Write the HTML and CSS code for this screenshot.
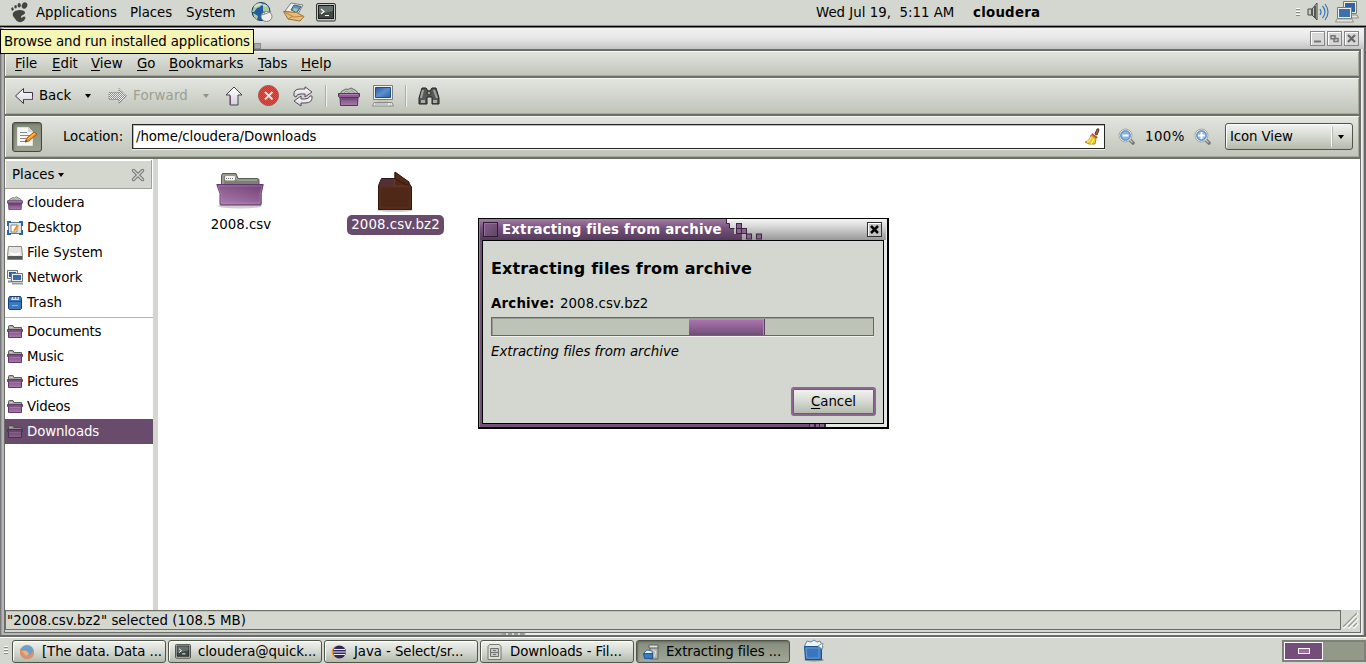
FILE: index.html
```
<!DOCTYPE html>
<html lang="en">
<head>
<meta charset="utf-8">
<title>Downloads - File Browser</title>
<link rel="stylesheet" href="styles.css">
</head>
<body>
<svg class="defs" width="0" height="0">
  <defs>
    <linearGradient id="purple" x1="0" y1="0" x2="0" y2="1"><stop offset="0" stop-color="#75477c"/><stop offset="1" stop-color="#a97bab"/></linearGradient>
    <linearGradient id="folderFront" x1=".8" y1="0" x2=".2" y2="1"><stop offset="0" stop-color="#744578"/><stop offset="1" stop-color="#aa7aad"/></linearGradient>
    <linearGradient id="titleFill" x1="0" y1="0" x2="0" y2="21" gradientUnits="userSpaceOnUse"><stop offset="0" stop-color="#a17ba6"/><stop offset=".45" stop-color="#74517a"/><stop offset="1" stop-color="#553a5b"/></linearGradient>
    <linearGradient id="screen" x1="0" y1="0" x2="1" y2="1"><stop offset="0" stop-color="#245b9f"/><stop offset=".5" stop-color="#5c91ce"/><stop offset="1" stop-color="#2860a4"/></linearGradient>
    <linearGradient id="silver" x1="0" y1="0" x2="0" y2="1"><stop offset="0" stop-color="#fff"/><stop offset="1" stop-color="#d5d3d7"/></linearGradient>
    <pattern id="redDots" width="2" height="2" patternUnits="userSpaceOnUse"><rect width="2" height="2" fill="#dd5048"/><rect width="1" height="1" fill="#84504a"/><rect x="1" y="1" width="1" height="1" fill="#84504a"/></pattern>
    <pattern id="greyDots" width="2" height="2" patternUnits="userSpaceOnUse"><rect width="2" height="2" fill="#eeefec"/><rect width="1" height="1" fill="#8b8c8c"/><rect x="1" y="1" width="1" height="1" fill="#8b8c8c"/></pattern>
    <symbol id="folder16" viewBox="0 0 16 14">
      <path d="M1.500 8V1.500Q1.500.5 2.500.5H6L7 2.500H14.500V8z" fill="#a5a9a0" stroke="#5c6058"/>
      <path d="M2.500 2.500h3" stroke="#c8ccc3"/>
      <path d="M.5 4.500h15v2H14.500V12.500H1.500V6.500H.5z" fill="url(#purple)" stroke="#62396a"/>
      <path d="M2.500 7.500h11" stroke="#b889bb" stroke-opacity=".6"/>
    </symbol>
    <symbol id="home" viewBox="0 0 22 19">
      <path d="M2 7 4 4l4-2 2 .500L13 1l3 1.500 2.500 1.500L20 7z" fill="#c3c6bd" stroke="#656860"/>
      <path d="M6 6l2-2 3 1.500 2-2 4 2.500" fill="none" stroke="#92958c"/>
      <path d="M2 10h18l-.5 8.500h-17z" fill="url(#purple)" stroke="#55315b"/>
      <path d="M.5 6.500h21v3l-1 1h-19l-1-1z" fill="#8b5c91" stroke="#55315b"/><path d="M2 7.500h18" stroke="#b080b4"/><path d="M4 12h14" stroke="#6b4271"/>
    </symbol>
    <symbol id="terminal" viewBox="0 0 20 19">
      <rect x=".5" y=".5" width="19" height="17.500" rx="1.500" fill="#c6c8c3" stroke="#33352f"/>
      <rect x="2.500" y="2.500" width="15" height="13" fill="#3e4946" stroke="#171a18"/>
      <path d="M3 3h14v5L3 11z" fill="#7d8784" opacity=".65"/>
      <path d="M5 6l3 2.500L5 11M9 12.500h4" fill="none" stroke="#fff" stroke-width="1.200"/>
    </symbol>
    <symbol id="zoomGlass" viewBox="0 0 17 17">
      <path d="M11 11l4 4" stroke="#767870" stroke-width="3.500" stroke-linecap="round"/><path d="M12 12l2.500 2.500" stroke="#c4c6c1" stroke-width="1.200"/>
      <circle cx="7.500" cy="7.500" r="6.500" fill="#ecefec" stroke="#a2a8a4"/><circle cx="7.500" cy="7.500" r="4.800" fill="#8bb3df" stroke="#477cb9"/>
    </symbol>
  </defs>
</svg>

<header class="panel">
  <svg class="foot" width="18" height="21" viewBox="0 0 18 21" fill="#444542"><ellipse cx="14.500" cy="3.500" rx="2.700" ry="3.300" transform="rotate(25 14.500 3.500)"/><ellipse cx="9.200" cy="3.300" rx="1.600" ry="2.200"/><ellipse cx="5.600" cy="4.700" rx="1.300" ry="1.800"/><ellipse cx="2.500" cy="7" rx="1.200" ry="1.700" transform="rotate(-20 2.500 7)"/><path d="M3 11C5 7 15 7 15 10.500c0 3-4 2-4 4.500 0 1 1 1 2 0 2-1 3 0 2 2-2 4-7 4-9 1C4 15 2 14 3 11z"/></svg>
  <span>Applications</span><span>Places</span><span>System</span>
  <svg width="22" height="21" viewBox="0 0 22 21"><circle cx="10" cy="9.500" r="9" fill="#235ca1" stroke="#17365f"/><path d="M3 4C5 1 9 0 11 2l-2 3-3 1-3 4-2 0zM12 3c4-2 7 3 6 7l-3 2-3-3zM2 11l5 3-1 4-3-3z" fill="#a9ce9b"/><path d="M4 5Q9 0 15 4" stroke="#eef6fd" stroke-width="2" opacity=".6" fill="none"/><ellipse cx="15.500" cy="14.500" rx="5.500" ry="5" fill="#eeeeec" stroke="#7e8582"/><path d="M10 13q5-1 9-3M14 12l-1-3" fill="none" stroke="#858a88"/></svg>
  <svg width="22" height="20" viewBox="0 0 22 20"><path d="M2 9 8 1l12 2-5 9z" fill="#efefeb" stroke="#80837e"/><path d="M8 8l3-5 7 1.500-4 6z" fill="#6694b9" stroke="#39627e"/><path d="M11 6l4 1-2 3-3-2z" fill="#9ccbc8"/><path d="M.5 9.500l13 1 7.500 4-4 4.500L5 17z" fill="#e7bd7c" stroke="#a27132"/><path d="M1 10l10 5 9-1M5 17l5-3" fill="none" stroke="#b98543"/></svg>
  <svg width="20" height="19"><use href="#terminal"/></svg>
  <span class="clock">Wed Jul 19,  5:11 AM</span><b>cloudera</b>
  <i class="grip"></i>
  <svg width="22" height="20" viewBox="0 0 22 20"><path d="M1 7h4l5-6v17l-5-5H1z" fill="#c5c7c3" stroke="#484b47"/><path d="M5 7v6M8 4v12" stroke="#555853" stroke-width="2"/><path d="M13 7q2 3 0 6M15.500 4q5 6 0 12M18 2q6 8 0 16" fill="none" stroke="#4276ae" stroke-width="1.200"/></svg>
  <svg width="24" height="22" viewBox="0 0 24 22"><path d="M8.500.5h13v12h-13z" fill="#eeeeec" stroke="#777a75"/><path d="M10 2h10v9H10z" fill="#2f639f"/><path d="M10 14h12l1.500 3H9z" fill="#e4e5e1" stroke="#8d908a"/><path d="M2.500 6.500h14v11h-14z" fill="#eeeeec" stroke="#777a75"/><path d="M4 8h11v8H4z" fill="#3c70af"/><path d="M2 18h15l1.500 3H.5z" fill="#e6e7e3" stroke="#92958d"/></svg>
</header>

<main class="window">
  <div class="titlebar"><i class="bit"></i>
    <i class="wbtn"><svg width="9" height="9"><path d="M1 7.500h7" stroke="#777" stroke-width="2"/></svg></i>
    <i class="wbtn"><svg width="9" height="9" fill="none" stroke="#777" stroke-width="1.500"><path d="M1 1.800h4v3H1zM4 4.500h4v3H4z"/></svg></i>
    <i class="wbtn"><svg width="9" height="9"><path d="M1 1l7 7M8 1L1 8" stroke="#666" stroke-width="2.200"/></svg></i>
  </div>
  <div class="client">
    <nav class="menubar"><span><u>F</u>ile</span><span><u>E</u>dit</span><span><u>V</u>iew</span><span><u>G</u>o</span><span><u>B</u>ookmarks</span><span><u>T</u>abs</span><span><u>H</u>elp</span></nav>
    <div class="toolbar">
      <svg width="19" height="18" viewBox="0 0 19 18"><path d="M.5 9 8.500 1.500V5.500H17.500V12.500H8.500V16.500z" fill="url(#silver)" stroke="#3e3443"/><path d="M9 12.500h8.500v-3" fill="none" stroke="#69496d"/></svg>
      <span class="snug">Back</span><i class="tri"></i>
      <svg width="20" height="18" viewBox="0 0 20 18"><path d="M18.500 9 11 1.500V5.500H1V12.500H11V16.500z" fill="url(#greyDots)" stroke="#77787a" stroke-dasharray="1 1"/></svg>
      <span class="off wide">Forward</span><i class="tri off"></i>
      <svg width="18" height="20" viewBox="0 0 18 20"><path d="M9 1 17 9H13V19H5V9H1z" fill="url(#silver)" stroke="#494250"/><path d="M5.500 10v8.500" stroke="#755078"/></svg>
      <svg width="22" height="22" viewBox="0 0 22 22"><circle cx="10.500" cy="10.500" r="10" fill="url(#redDots)" stroke="#a5504b"/><path d="M7 7l7.500 7.500M14.500 7L7 14.500" stroke="#eeddda" stroke-width="2"/></svg>
      <svg width="22" height="21" viewBox="0 0 22 21"><path d="M2 10Q1 3 8 3h5V.8L20 6l-7 5V8H8Q5 8 4 11z" fill="url(#silver)" stroke="#574b5d"/><path d="M20 10q1 7-7 7H9v3L2 15l7-5v3h4q4 0 5-3z" fill="url(#silver)" stroke="#574b5d"/></svg>
      <i class="sep"></i>
      <svg width="22" height="19"><use href="#home"/></svg>
      <svg width="22" height="22" viewBox="0 0 22 22"><path d="M1.500.5h19v14h-19z" fill="#efefec" stroke="#7c7e79"/><path d="M3.500 2.500h15v10h-15z" fill="url(#screen)" stroke="#204e86"/><path d="M6 15h10v2H6z" fill="#c3c5c0"/><path d="M2 17.500h18l1.500 3.500H.5z" fill="#eee" stroke="#888b85"/><path d="M3 19h13M18 19h1" stroke="#9a9c96"/></svg>
      <i class="sep"></i>
      <svg width="22" height="18" viewBox="0 0 22 18"><path d="M4 1h4l2 3h2l2-3h4l3 10v6h-7v-7H9v7H1v-6z" fill="#555a57" stroke="#20231f"/><path d="M5 3l-2 8M16 3l3 8" stroke="#a1a6a1" stroke-width="2"/><path d="M3 13h4v3H3zM15 13h4v3h-4z" fill="#a9ada9"/><circle cx="11" cy="6" r="2" fill="#9ca19d" stroke="#282b28"/></svg>
    </div>
    <div class="location">
      <div class="toggle"><svg width="22" height="22" viewBox="0 0 22 22"><path d="M1.500 1.500h11l4 4v14h-15z" fill="#f6f6f4" stroke="#e2e3de"/><path d="M12 1v5h5" fill="#d5d7d2"/><path d="M4 6.500h7M4 9.500h10M4 12.500h9M4 15.500h6" stroke="#8a8c88" stroke-width="1.200"/><path d="M9 16l2-4 7-6 3 2-8 7z" fill="#f2922e" stroke="#b75300"/><path d="M9 16l1-2 1 1z" fill="#222"/><path d="M12 13l7-6" stroke="#ffd24b"/></svg></div>
      <span class="snug">Location:</span>
      <div class="entry"><span class="snug">/home/cloudera/Downloads</span><svg width="15" height="17" viewBox="0 0 15 17"><path d="M10 6l2-5q2-1 2 1l-2 5z" fill="#a86637" stroke="#5e351b"/><path d="M7 5l6 4-2 2-5-4z" fill="#b9803a"/><path d="M6 7l5 4-1 5H4L0 14q5-1 6-7z" fill="#edce30" stroke="#b1921b"/><path d="M6 9q0 3-4 5M9 11l-3 5" stroke="#fff08a" fill="none"/><path d="M7 6l5 4" stroke="#b23a44"/></svg></div>
      <svg width="17" height="17"><use href="#zoomGlass"/><path d="M4.500 7.500h6" stroke="#fff" stroke-width="2"/></svg>
      <span class="percent">100%</span>
      <svg width="17" height="17"><use href="#zoomGlass"/><path d="M4 7.500h7M7.500 4v7" stroke="#fff" stroke-width="2"/></svg>
      <div class="combo"><span>Icon View</span><i class="tri"></i></div>
    </div>
    <div class="body">
      <aside>
        <div class="sidehead"><span>Places</span><i class="tri"></i><svg width="14" height="14" viewBox="0 0 14 14"><path d="M2.500 2.500l9 9M11.500 2.500l-9 9" stroke="#747772" stroke-width="3.500" stroke-linecap="round"/><path d="M2.500 2.500l9 9M11.500 2.500l-9 9" stroke="#cfd2cb" stroke-width="1.500" stroke-linecap="round"/></svg></div>
        <ul>
          <li><svg width="16" height="14"><use href="#home"/></svg>cloudera</li>
          <li><svg width="16" height="14" viewBox="0 0 16 14"><rect x="1.500" y="1.500" width="13" height="11" fill="#dde5df" stroke="#627b87"/><path d="M1 5V1H4M12 1h3V5M1 9v4H4M12 13h3V9" fill="none" stroke="#2c64aa" stroke-width="2"/><path d="M4 4h6v7H4z" fill="#fff" stroke="#888"/><path d="M7 10l4-6" stroke="#ef9020" stroke-width="2"/></svg>Desktop</li>
          <li><svg width="16" height="14" viewBox="0 0 16 14"><path d="M1.500.5h13l1 9v4H.5v-4z" fill="#e4e5e1" stroke="#858883"/><path d="M3 7q5 3 10 0" stroke="#fff" stroke-width="2" fill="none"/><path d="M1 10h14v3H1z" fill="#565a56"/></svg>File System</li>
          <li><svg width="16" height="15" viewBox="0 0 16 15"><path d="M.5.5h10v8H.5z" fill="#eee" stroke="#747771"/><path d="M2 2h7v5H2z" fill="#2d5e9d"/><path d="M1 11.500h5" stroke="#8a8d87" stroke-width="2"/><path d="M4.500 3.500h11v8h-11z" fill="#eee" stroke="#747771"/><path d="M6 5h8v5H6z" fill="#326baf"/><path d="M5 13.500h11" stroke="#999c96" stroke-width="2"/></svg>Network</li>
          <li><svg class="trash" width="14" height="14" viewBox="0 0 14 14"><path d="M.5 2.500l1-2h11l1 2v10l-1 1h-11l-1-1z" fill="#3d78bd" stroke="#153f77"/><path d="M3 4l1-3h7v3z" fill="#d9dfe0"/><path d="M6 1v2M9 1v2" stroke="#294971"/><path d="M1 5.500h12" stroke="#1f4f8e"/><path d="M4 9.500h6" stroke="#88b3e0"/></svg>Trash</li>
        </ul>
        <ul class="marks">
          <li><svg width="16" height="14"><use href="#folder16"/></svg>Documents</li>
          <li><svg width="16" height="14"><use href="#folder16"/></svg>Music</li>
          <li><svg width="16" height="14"><use href="#folder16"/></svg>Pictures</li>
          <li><svg width="16" height="14"><use href="#folder16"/></svg>Videos</li>
          <li class="on"><svg width="16" height="14"><use href="#folder16"/></svg>Downloads</li>
        </ul>
      </aside>
      <section class="files">
        <figure><svg width="48" height="38" viewBox="0 0 48 38"><ellipse cx="24" cy="34" rx="22" ry="2.500" fill="#bbb" opacity=".7"/><path d="M5.500 14V3.500l1-2H20l2 5h19.500q1.500 0 1.500 2V14z" fill="#7c7f77" stroke="#5a5d55"/><path d="M7 12V3h12l2 5h20" fill="none" stroke="#b4b7ae"/><rect x="9" y="4" width="10" height="4.500" rx="1" fill="#f4f4f2"/><path d="M10 6.500h8" stroke="#777" stroke-dasharray="1 1"/><path d="M.8 12.500h46.400l-2 9v10.500q0 1-1 1H5q-1 0-1-1V21.500z" fill="url(#folderFront)" stroke="#60386a"/><path d="M2 14h44l-2 8v9H5v-9z" fill="none" stroke="#bd92bf" stroke-opacity=".5"/></svg><figcaption>2008.csv</figcaption></figure>
        <figure class="on"><svg width="36" height="42" viewBox="0 0 36 42"><ellipse cx="18" cy="39" rx="18" ry="2" fill="#bbb" opacity=".7"/><path d="M1.500 14.500l3-7H18V1.500L31.500 11.500 34.500 16V38.500H1.500z" fill="#4f2818" stroke="#34180f"/><path d="M2 15l3-7h13l-1 7z" fill="#523037"/><path d="M18 1v7l14 7V11z" fill="#552819" stroke="#35170f"/><path d="M18 8l-1 7h16" fill="none" stroke="#693b29"/><path d="M3 16v21h30V16z" fill="none" stroke="#5e3221"/></svg><figcaption>2008.csv.bz2</figcaption></figure>
      </section>
    </div>
    <footer class="status"><span>"2008.csv.bz2" selected (108.5 MB)</span><svg width="19" height="20" viewBox="0 0 19 20"><path d="M2 18L17 3M7 18L17 8M12 18l5-5" stroke="#fff" stroke-width="2.500"/><path d="M2 17L16 3M7 17l9-9M12 17l4-4" stroke="#979c91" stroke-width="1.500"/></svg></footer>
  </div>
</main>

<footer class="taskbar">
  <i class="grip"></i>
  <div class="task"><svg width="16" height="16" viewBox="0 0 16 16"><circle cx="8" cy="8" r="7" fill="#6fa0c2"/><path d="M1 4q-1 11 8 11 8-1 5-10 0 5-4 6-5 1-5-5L3 7z" fill="#df9069"/><path d="M3 7q5-2 7 3l-3 2z" fill="#efb178"/></svg>[The data. Data ...</div>
  <div class="task"><svg width="16" height="15"><use href="#terminal"/></svg>cloudera@quick...</div>
  <div class="task"><svg width="16" height="14" viewBox="0 0 16 14"><circle cx="7" cy="7" r="6.500" fill="#f29a36"/><circle cx="8.500" cy="7" r="6.500" fill="#2e2860"/><path d="M3 4.500h11M2 7h13M3 9.500h11" stroke="#eeecf3" stroke-width="1.200"/></svg>Java - Select/sr...</div>
  <div class="task"><svg width="16" height="16" viewBox="0 0 16 16"><path d="M2.500.5h10l1.500 2v13H1v-13z" fill="#dededb" stroke="#777973"/><path d="M3.500 4.500h8v4h-8zM3.500 8.500h8v4h-8zM6 6.500h3M6 10.500h3" fill="#c9cac6" stroke="#6f716c"/></svg>Downloads - Fil...</div>
  <div class="task on"><svg width="16" height="16" viewBox="0 0 16 16"><path d="M7 3h8v12H7z" fill="#b1b4ae" stroke="#666962"/><path d="M6 1h9v3H6z" fill="#dfe0dc" stroke="#5e615b"/><path d="M1 9l3-3 5 1 1 7H2z" fill="#eef3f8" stroke="#4472a1"/><path d="M.5 9.500h9v5h-8z" fill="#397bc1" stroke="#235795"/><path d="M10 6l3 2-2 5" stroke="#e5e5e1" fill="none"/></svg>Extracting files ...</div>
  <svg class="bin" width="22" height="22" viewBox="0 0 22 22"><ellipse cx="11" cy="20" rx="10" ry="1.500" fill="#888d85"/><path d="M1.500 6 4 1l4 1 3-2 3 2 3-1 3 6-2 4z" fill="#edf2f3" stroke="#6385a8"/><path d="M1.500 6.500h15l2 3v10h-16z" fill="#3976bf" stroke="#1e508d"/><path d="M3 8h13v10H4z" fill="none" stroke="#669bd5"/><path d="M15 6l5-3-1 6z" fill="#fff" stroke="#8497a5"/></svg>
  <div class="pager"><i class="cell"><i></i></i></div>
</footer>

<div class="dialog">
  <div class="dtitle"><i class="dmenu"></i><b>Extracting files from archive</b>
    <svg class="blocks" width="42" height="21" viewBox="0 0 42 21"><path d="M0 0h2v4h3v6h5v5h8v6H0z" fill="url(#titleFill)"/><path d="M2.500 0v4.500h3v5h5" fill="none" stroke="#382440"/><g fill="#8a6390" stroke="#3b2541"><rect x="12.500" y="4.500" width="5" height="5"/><rect x="12.500" y="9.500" width="5" height="5"/><rect x="17.500" y="9.500" width="5" height="5"/><rect x="22.500" y="15" width="5" height="5"/><rect x="32.500" y="15" width="5" height="5"/></g></svg>
    <i class="dclose"><svg width="9" height="9"><path d="M1 1l7 7M8 1L1 8" stroke="#000" stroke-width="2.500"/></svg></i>
  </div>
  <div class="dbody">
    <h1>Extracting files from archive</h1>
    <p class="arch"><b>Archive:</b><span>2008.csv.bz2</span></p>
    <div class="progress"><i></i></div>
    <p class="note">Extracting files from archive</p>
    <button><u>C</u>ancel</button>
  </div>
</div>
<div class="tip">Browse and run installed applications</div>
</body>
</html>
```
FILE: styles.css
```
* { box-sizing: border-box; }
html, body { margin: 0; width: 1366px; height: 664px; overflow: hidden; }
body { position: relative; display: flex; flex-direction: column; background: #d4d7d0; font: 13.333px/16px "DejaVu Sans", sans-serif; color: #000; }
svg { display: block; flex: none; overflow: visible; }
.defs { position: absolute; }
span, b, p, li, figcaption, .task, .tip { white-space: pre; }
b { letter-spacing: .2px; }
u { text-underline-offset: 2px; text-decoration-thickness: 1px; text-decoration-skip-ink: none; }
i { display: block; }
.snug { letter-spacing: -.08px; }
.wide { letter-spacing: .2px; }
.percent { letter-spacing: .4px; }

.panel { flex: none; height: 27px; padding: 0 0 2px 10px; display: grid; grid-template-columns: 26px 94px 56px 65px 32px 33px 500px 157px 323px 11px 28px 1fr; align-items: center; border-bottom: 1px solid #000; box-shadow: inset 0 -1px #8b8e87; }
.panel span, .panel b { padding-top: 1px; letter-spacing: -.04px; }
.panel b { letter-spacing: .25px; }
.panel .clock { letter-spacing: .01px; }
.grip { width: 4px; height: 9px; background: repeating-linear-gradient(#fff 0 1px, #888b84 1px 2px, #d4d7d0 2px 3px); }

.window { flex: none; height: 610px; padding: 0 5px 2px 4px; display: flex; flex-direction: column; background: linear-gradient(90deg, transparent 500px, #999b9c 504px 506px, #d8d8d8 506px 508px, #999b9c 508px 512px, #d8d8d8 512px 514px, #999b9c 514px 518px, #d8d8d8 518px 520px, #999b9c 520px 524px, #ececed 526px) 0 100% / 1361px 3px no-repeat, linear-gradient(90deg, #77777a 0 1px, #9b9b9e 1px 2px, #b5b5b8 2px 4px, transparent 4px 1361px, #f6f6f6 1361px 1362px, #dddddf 1362px 1363px, #b7b7b9 1363px 1364px, #68686b 1364px), #b7b7b9; border-bottom: 2px solid #68696a; }
.titlebar { flex: none; height: 22px; margin-right: -3px; padding-right: 5px; border-top: 1px solid #77787a; display: flex; justify-content: flex-end; align-items: center; gap: 2px; background: linear-gradient(#f3f3f3, #e6e6e6 50%, #c4c4c7); }
.bit { width: 7px; height: 6px; margin: 14px auto 0 250px; background: #aaa; border: 1px solid #8c8c8f; }
.wbtn { width: 15px; height: 15px; border: 1px solid #858588; box-shadow: inset 1px 1px #fff; background: #d7d7d8; display: grid; place-items: center; }
.client { flex: 1; min-height: 0; display: flex; flex-direction: column; border: solid #6b6e65; border-width: 2px 1px 1px; background: #d4d7d0; }
.menubar, .toolbar, .location { flex: none; display: grid; align-items: center; background: linear-gradient(#e3e6e0, #bfc4b9); border: solid #6d7067; border-width: 0 1px 2px 0; box-shadow: inset 1px 1px #f5f7f3, inset -1px -1px #a4a99e; }
.menubar { height: 27px; padding: 1px 0 0 10px; grid-template-columns: 37px 39px 46px 32px 89px 43px 1fr; }
.toolbar { height: 38px; padding-left: 10px; grid-template-columns: 24px 46px 23px 25px 70px 22px 33px 34px 34px 12px 34px 34px 12px 1fr; }
.toolbar .sep { margin-left: -1px; }
.tri { width: 0; height: 0; border: 3px solid transparent; border-top: 4px solid #000; border-bottom: 0; }
.off { color: #9ba094; }
.tri.off { border-top-color: #8e9388; }
.sep { width: 2px; height: 22px; background: linear-gradient(90deg, #a9ada3 50%, #f1f3ef 50%); }
.location { height: 43px; padding-left: 7px; grid-template-columns: 51px 69px 986px 27px 49px 31px 128px; }
.toggle { width: 30px; height: 30px; border: 1px solid #44493f; border-radius: 3px; background: linear-gradient(#848c7c, #9aa291); display: grid; place-items: center; box-shadow: inset 1px 1px 2px #62685b; }
.entry { width: 973px; height: 25px; padding: 0 4px 0 3px; border: 1px solid #252525; background: #fff; box-shadow: 0 1px #eef0ed, inset 1px 1px #bbb; display: flex; align-items: center; justify-content: space-between; }
.combo { height: 27px; border: 1px solid #50544b; border-radius: 3px; background: linear-gradient(#f0f2ef, #d5d9d1 50%, #b3baab); box-shadow: inset 1px 1px #fff; display: grid; grid-template-columns: 102px 1fr; align-items: center; padding-left: 4px; }
.combo .tri { margin-left: 6px; }
.combo span { border-right: 1px solid #fff; margin: 2px 0; padding: 2px 0; box-shadow: 1px 0 #b4b8af; letter-spacing: -.1px; }

.body { flex: 1; min-height: 0; display: flex; background: #fff; }
aside { width: 153px; border-right: 5px solid #d4d7d0; }
.sidehead { height: 29px; width: 147px; margin-top: 1px; padding: 1px 0 0 7px; display: grid; grid-template-columns: 46px 73px 1fr; align-items: center; background: #d4d7d0; border: solid #9ea299; border-width: 0 1px 1px 0; box-shadow: inset 1px 1px #fff; }
ul { list-style: none; margin: 0; padding: 1px 0 2px; }
li { height: 25px; padding-left: 2px; display: flex; align-items: center; gap: 4px; letter-spacing: -.04px; }
li .trash { margin: 0 1px; }
.marks { border-top: 1px solid #b4b8ae; padding-top: 1px; }
.marks li { letter-spacing: -.18px; }
.marks li.on { width: 148px; background: #694c6b; color: #fff; letter-spacing: -.12px; }
li.on svg { filter: brightness(.82); }
.files { display: flex; padding: 12px 0 0 50px; gap: 43px; }
figure { margin: 0; width: 66px; height: 64px; display: flex; flex-direction: column; align-items: center; }
figure svg { margin-top: 1px; margin-right: 2px; }
figure + figure { width: 97px; margin-left: 30px; }
figure + figure svg { margin-top: 0; }
figcaption { margin-top: 5px; height: 20px; line-height: 20px; }
.on figcaption { width: 97px; text-align: center; background: #694c6b; color: #fff; border-radius: 5px; margin-top: 2px; line-height: 19px; letter-spacing: .08px; }
.status { flex: none; height: 22px; display: flex; justify-content: space-between; }
.status span { width: 1337px; height: 20px; border: 1px solid #6d7067; padding-left: 1px; line-height: 19px; box-shadow: inset 0 1px #bfc3ba; letter-spacing: .03px; }

.taskbar { flex: none; height: 27px; padding: 2px 0 0 4px; display: flex; align-items: flex-start; gap: 2px; border-top: 1px solid #fff; }
.taskbar .grip { margin: 6px 2px 0 0; }
.task { width: 154px; height: 23px; padding: 0 0 0 6px; display: flex; align-items: center; gap: 7px; border: 1px solid #50554a; border-radius: 3px; box-shadow: inset 1px 1px #fff; background: linear-gradient(#f0f2ef, #d5d9d1 50%, #b3baab); letter-spacing: -.08px; }
.task.on { background: linear-gradient(#848c7b, #a1a898); box-shadow: inset 1px 1px 2px #62685b; }
.bin { margin-left: 11px; }
.pager { margin-left: auto; width: 84px; height: 22px; border: solid #7d8177; border-width: 2px; background: #929989; }
.cell { width: 39px; height: 18px; border: 1px solid #fff; background: #754d7a; display: grid; place-items: center; }
.cell i { width: 12px; height: 6px; border: 1px solid #fff; background: #a06ba5; }

.tip { position: absolute; left: 0; top: 29px; width: 254px; height: 25px; padding-left: 3px; border: 1px solid #000; background: #f5f5b5; line-height: 23px; letter-spacing: -.11px; }
.dialog { position: absolute; left: 478px; top: 218px; width: 411px; height: 211px; border: solid #000; border-width: 1px 2px 2px 1px; padding: 0 3px 3px; background: linear-gradient(90deg, #735078 0 330px, #3a2540 330px 331px, #89618f 331px 335px, #3a2540 335px 337px, #89618f 337px 340px, #3a2540 340px 341px, #89618f 341px 345px, #3a2540 345px 347px, #e6e6e6 347px); box-shadow: inset 1px 0 #9f7ba4; }
.dtitle { height: 21px; margin: 0 -2px; padding: 0 4px 0 3px; display: flex; align-items: center; background: linear-gradient(#a17ba6, #74517a 45%, #553a5b) 0 0 / 245px 100% no-repeat, linear-gradient(#f4f4f4, #d8d8d8 35%, #989898); color: #fff; }
.dmenu { width: 15px; height: 15px; border: 1px solid #2e1d33; background: linear-gradient(135deg, #846089, #614467); box-shadow: inset 1px 1px #93709a; }
.dtitle b { width: 224px; margin-left: 4px; }
.blocks { margin-left: -2px; }
.dclose { width: 15px; height: 15px; margin-left: auto; border: 1px solid #303030; box-shadow: inset 1px 1px #fff; background: #c4c4c4; display: grid; place-items: center; }
.dbody { height: 184px; border: 1px solid #000; background: #d4d7d0; padding: 18px 8px 0; }
h1 { margin: 0 0 17px; font-size: 16px; line-height: 20px; white-space: pre; letter-spacing: .14px; }
p { margin: 0; height: 16px; }
.arch { display: grid; grid-template-columns: 69px 1fr; }
.arch span { letter-spacing: .08px; }
.progress { width: 383px; height: 19px; margin: 5px 0 8px; padding: 1px 0 0 197px; border: 1px solid #666a60; background: #bdc3b7; box-shadow: inset 1px 1px #989d92, 0 1px #f0f2ee; }
.progress i { width: 75px; height: 16px; border: 1px solid #b787bb; border-width: 1px 1px 0 0; box-shadow: 1px 0 #5c3e61; background: linear-gradient(#aa74b0, #704e75); }
.note { font-style: italic; letter-spacing: -.03px; }
button { display: block; width: 85px; height: 29px; margin: 27px 0 0 300px; padding: 0; font: inherit; color: #000; border: 2px solid #8b6791; border-radius: 3px; background: linear-gradient(#f4f5f3, #d5d9d2 50%, #b1b8a9); box-shadow: inset 0 0 0 1px #62665d; }
```
